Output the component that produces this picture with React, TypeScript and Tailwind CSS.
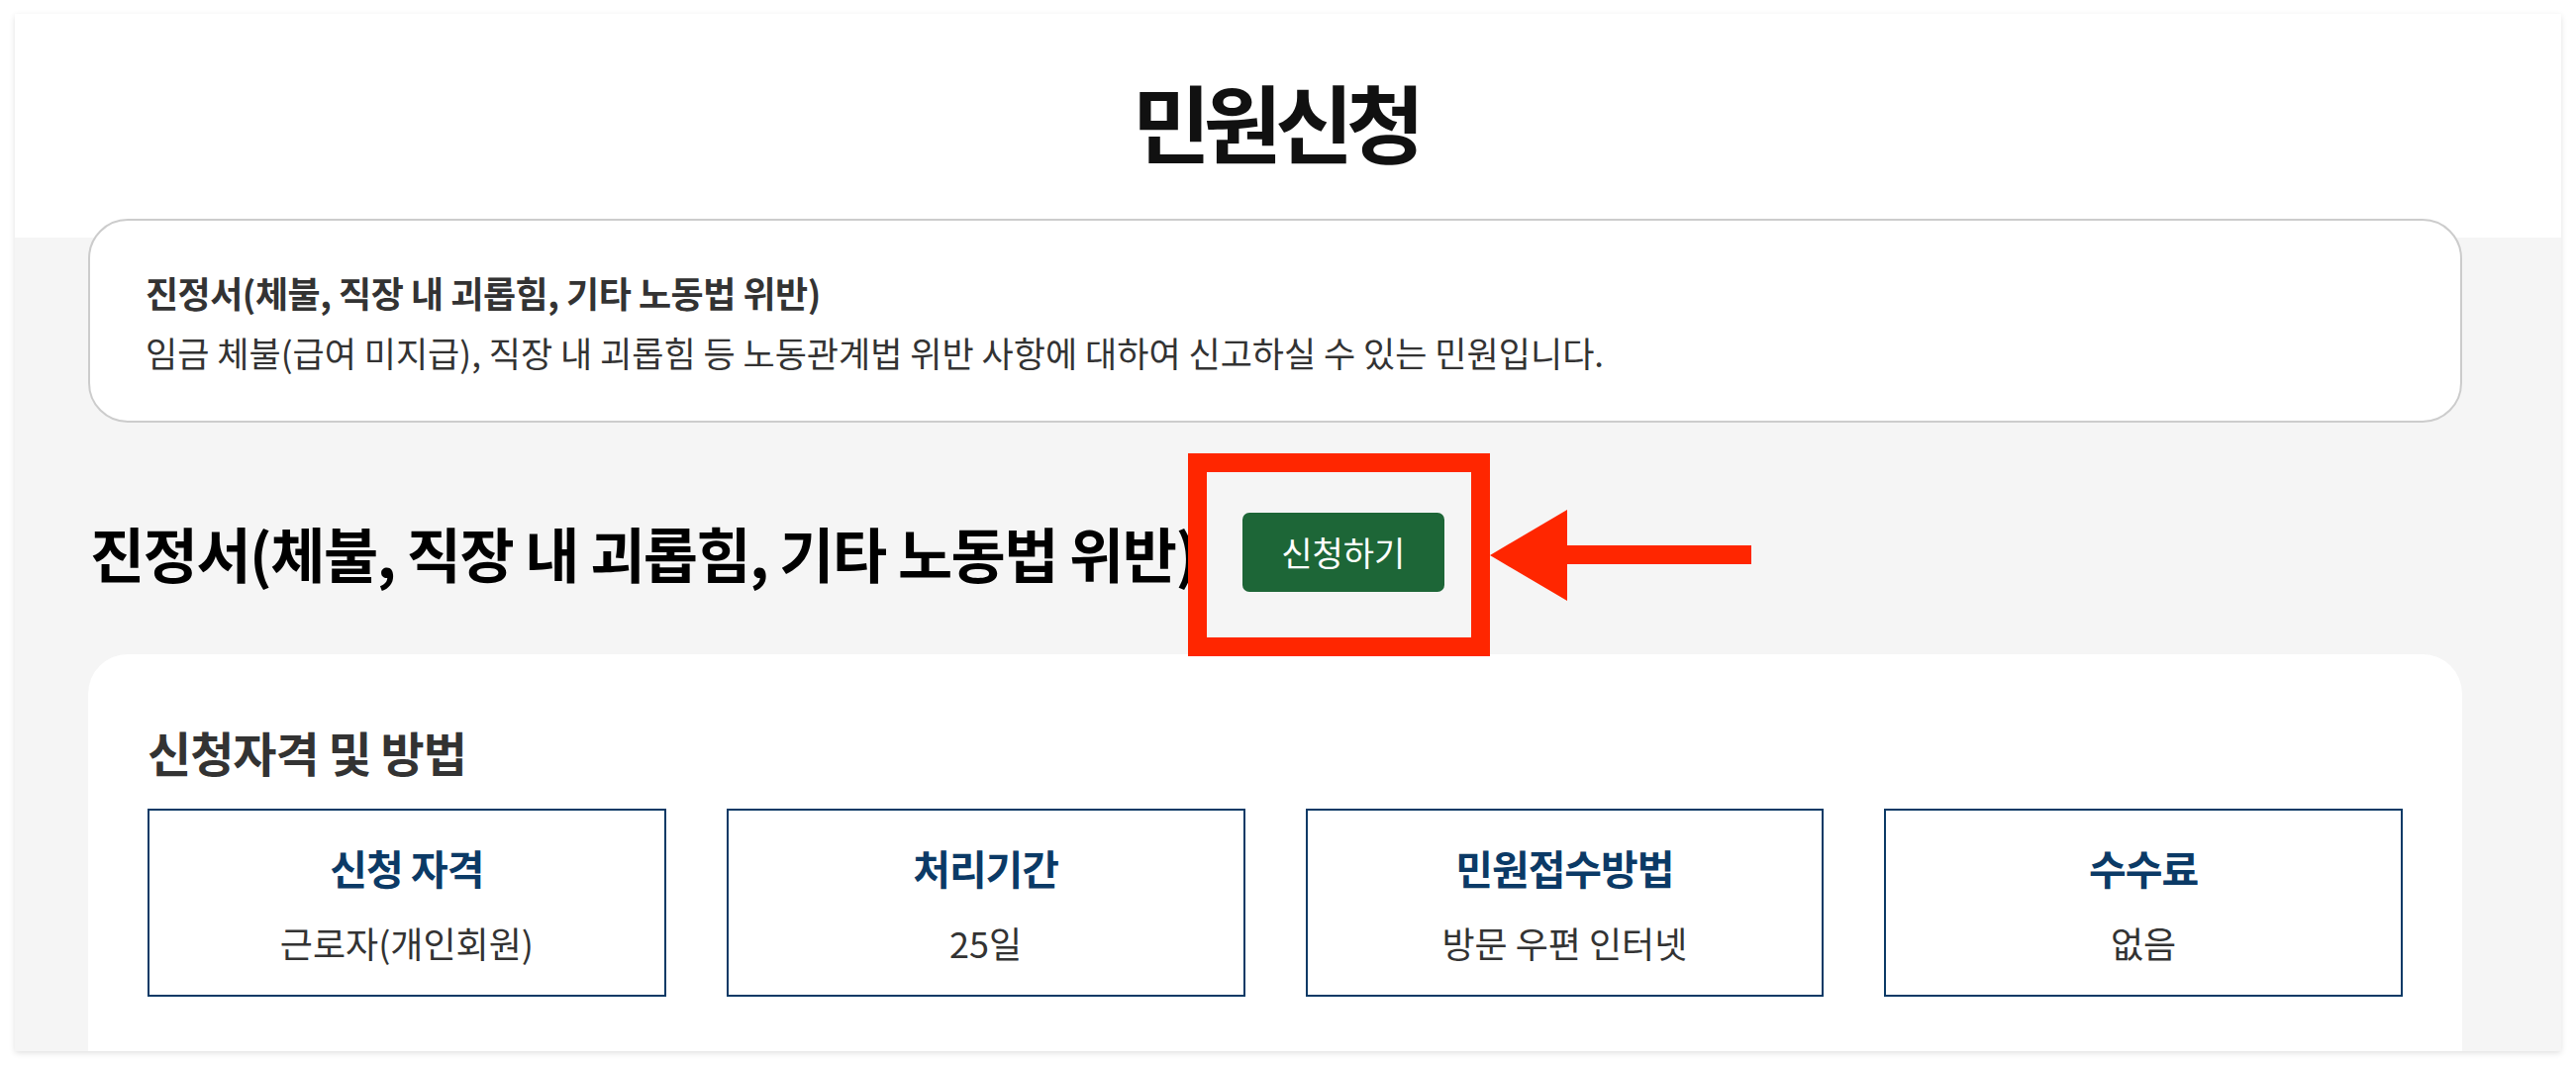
const items = [
  { title: "신청 자격", value: "근로자(개인회원)" },
  { title: "처리기간", value: "25일" },
  { title: "민원접수방법", value: "방문 우편 인터넷" },
  { title: "수수료", value: "없음" },
];

export default function App() {
  return (
    <div className="min-h-screen bg-white pt-[14px] pl-[15px] pr-[15px] font-['Noto_Sans_CJK_KR',sans-serif]">
      <div className="flex h-[1048px] w-[2572px] flex-col overflow-hidden bg-[#f5f5f5] shadow-[0_2px_6px_rgba(0,0,0,0.12)]">
        {/* header */}
        <div className="flex h-[226px] shrink-0 items-center justify-center bg-white pb-[10px] pl-[74px] pr-[100px]">
          <h1 className="text-[86px] font-bold leading-none tracking-[-7px] text-[#111]">민원신청</h1>
        </div>

        <div className="flex flex-1 flex-col pl-[74px] pr-[100px]">
          {/* summary box */}
          <div className="-mt-[19px] flex h-[206px] flex-col justify-center rounded-[40px] border-2 border-[#cccccc] bg-white pl-[56px] pt-[4px]">
            <p className="text-[36px] font-bold leading-[48px] tracking-[-0.5px] text-[#333]">
              진정서(체불, 직장 내 괴롭힘, 기타 노동법 위반)
            </p>
            <p className="mt-[12px] text-[35px] leading-[50px] text-[#333]">
              임금 체불(급여 미지급), 직장 내 괴롭힘 등 노동관계법 위반 사항에 대하여 신고하실 수 있는 민원입니다.
            </p>
          </div>

          {/* heading + apply button */}
          <div className="mt-[91px] flex items-center pl-[2px]">
            <h2 className="text-[60px] font-bold leading-none tracking-[-1.5px] text-black">
              진정서(체불, 직장 내 괴롭힘, 기타 노동법 위반)
            </h2>
            <div className="relative ml-[46px]">
              <button className="flex h-[80px] w-[204px] items-center justify-center rounded-[7px] bg-[#1d6637] text-[34px] leading-none text-white">
                신청하기
              </button>
              {/* annotation: red frame + arrow */}
              <div className="pointer-events-none absolute -left-[55px] -top-[60px] h-[205px] w-[305px] border-[19px] border-[#ff2600]" />
              <svg className="pointer-events-none absolute left-[250px] -top-[3px]" width="264" height="92" viewBox="0 0 264 92">
                <polygon points="0,46 78,0 78,36 264,36 264,55 78,55 78,92" fill="#ff2600" />
              </svg>
            </div>
          </div>

          {/* detail card */}
          <div className="mt-[63px] flex-1 rounded-t-[40px] bg-white px-[60px] pt-[68px]">
            <h3 className="text-[48px] font-bold leading-[60px] tracking-[-1px] text-[#333]">신청자격 및 방법</h3>
            <div className="mt-[28px] grid grid-cols-4 gap-[61px]">
              {items.map((it) => (
                <div
                  key={it.title}
                  className="flex h-[190px] flex-col items-center justify-center border-2 border-[#0b3a66] bg-white"
                >
                  <div className="text-[41px] font-bold leading-[52px] tracking-[-1px] text-[#0b3a66]">{it.title}</div>
                  <div className="mt-[28px] text-[36px] leading-[44px] text-[#333]">{it.value}</div>
                </div>
              ))}
            </div>
          </div>
        </div>
      </div>
    </div>
  );
}
